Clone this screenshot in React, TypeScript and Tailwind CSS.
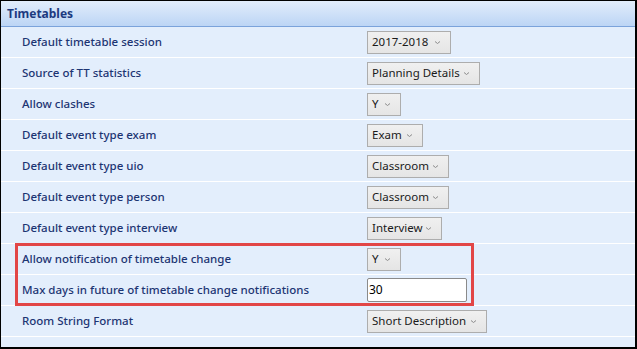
import React from "react";

type Row = { label: string; kind: "select" | "input"; value: string; width: string };

const rows: Row[] = [
  { label: "Default timetable session", kind: "select", value: "2017-2018", width: "w-[84px]" },
  { label: "Source of TT statistics", kind: "select", value: "Planning Details", width: "w-[113px]" },
  { label: "Allow clashes", kind: "select", value: "Y", width: "w-[34px]" },
  { label: "Default event type exam", kind: "select", value: "Exam", width: "w-[56px]" },
  { label: "Default event type uio", kind: "select", value: "Classroom", width: "w-[82px]" },
  { label: "Default event type person", kind: "select", value: "Classroom", width: "w-[82px]" },
  { label: "Default event type interview", kind: "select", value: "Interview", width: "w-[75px]" },
  { label: "Allow notification of timetable change", kind: "select", value: "Y", width: "w-[34px]" },
  { label: "Max days in future of timetable change notifications", kind: "input", value: "30", width: "w-[100px]" },
  { label: "Room String Format", kind: "select", value: "Short Description", width: "w-[120px]" },
];

function Chevron() {
  return (
    <svg width="7" height="5" viewBox="0 0 7 5" className="ml-auto shrink-0">
      <path d="M1 1.5 L3.5 3.5 L6 1.5" fill="none" stroke="#8c8c8c" strokeWidth="1" />
    </svg>
  );
}

function Field({ row }: { row: Row }) {
  if (row.kind === "input") {
    return (
      <div
        className={`${row.width} h-[24px] bg-white border border-[#8a8a8a] rounded-[2px] flex items-center pl-[1px] text-[12px] text-black`}
      >
        {row.value}
      </div>
    );
  }
  return (
    <div
      className={`${row.width} h-[23px] border border-[#adadad] bg-gradient-to-b from-[#f0f0f0] to-[#e5e5e5] flex items-center pl-[4px] pr-[9px] text-[11.5px] text-[#1a1a1a] whitespace-nowrap`}
    >
      <span className="shrink-0">{row.value}</span>
      <Chevron />
    </div>
  );
}

export default function App() {
  return (
    <div className="w-[637px] h-[349px] bg-white font-['Noto_Sans',sans-serif]">
      <div className="relative w-[637px] h-[349px] border border-black border-r-2 border-b-2 bg-[#e3eefc]">
        <div className="h-[26px] bg-gradient-to-b from-[#e2edfb] to-[#bcd5f5] border-b border-[#7ba3db] flex items-center pl-[6px] text-[12px] font-bold text-[#1c3a80]">
          Timetables
        </div>
        <div className="flex flex-col">
          {rows.map((row) => (
            <div key={row.label} className="h-[31px] border-b border-white flex items-center">
              <div className="w-[366px] pl-[21px] text-[11.5px] font-medium text-[#1d3573] whitespace-nowrap">{row.label}</div>
              <Field row={row} />
            </div>
          ))}
        </div>
        <div className="absolute left-[14px] top-[242px] w-[459px] h-[63px] border-[3px] border-[#e24646]" />
      </div>
    </div>
  );
}
